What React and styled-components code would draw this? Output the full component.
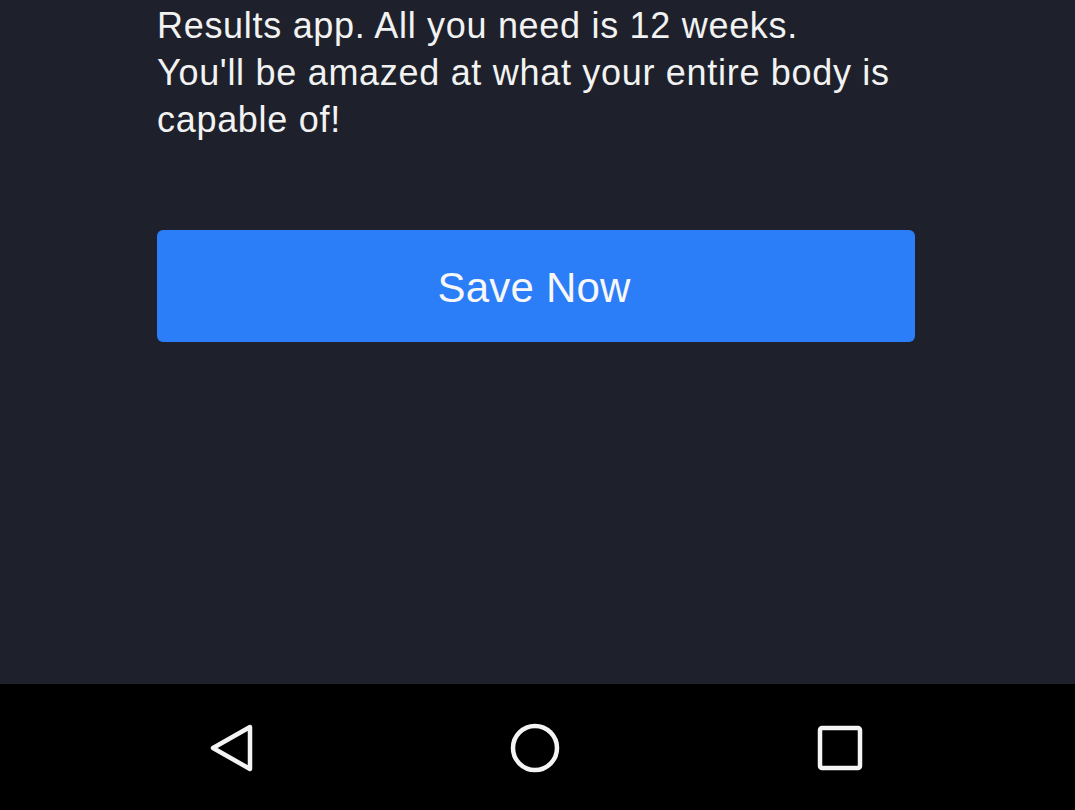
import React from "react";
import styled, { createGlobalStyle } from "styled-components";

const Global = createGlobalStyle`
  html, body { margin: 0; padding: 0; background: #1e212b; }
  #root { height: 810px; }
`;

const Screen = styled.div`
  width: 1075px;
  height: 810px;
  display: flex;
  flex-direction: column;
  background: #1e212b;
  font-family: "Liberation Sans", Arial, sans-serif;
  overflow: hidden;
`;

const Content = styled.main`
  flex: 1;
  display: flex;
  flex-direction: column;
  padding: 2px 150px 0 157px;
`;

const Body = styled.p`
  margin: 0;
  color: #f2f2f2;
  font-size: 36px;
  line-height: 47px;
  letter-spacing: 0.7px;
  white-space: nowrap;
`;

const PrimaryButton = styled.button`
  margin-top: 87px;
  width: 758px;
  height: 112px;
  border: none;
  border-radius: 6px;
  background: #2b7df8;
  color: #f7f7f7;
  font-family: "Liberation Sans", Arial, sans-serif;
  font-size: 42px;
  letter-spacing: 0.2px;
  padding: 3px 4px 0 0;
  cursor: pointer;
`;

const NavRow = styled.nav`
  height: 126px;
  background: #000;
  display: flex;
  align-items: center;
`;

const IconWrap = styled.div`
  width: ${(p) => p.$w}px;
  margin-left: ${(p) => p.$ml}px;
  display: flex;
  justify-content: center;
  align-items: center;
  padding-top: 2px;
`;

export default function App() {
  return (
    <>
      <Global />
      <Screen>
        <Content>
          <Body>
            Results app. All you need is 12 weeks.
            <br />
            You'll be amazed at what your entire body is
            <br />
            capable of!
          </Body>
          <PrimaryButton>Save Now</PrimaryButton>
        </Content>
        <NavRow>
          <IconWrap $w={50} $ml={207}>
            <svg width="50" height="52" viewBox="0 0 50 52">
              <path
                d="M43 5 L6 26 L43 47 Z"
                fill="none"
                stroke="#f4f4f4"
                strokeWidth="4.5"
                strokeLinejoin="round"
              />
            </svg>
          </IconWrap>
          <IconWrap $w={52} $ml={252}>
            <svg width="52" height="52" viewBox="0 0 52 52">
              <circle cx="26" cy="26" r="22" fill="none" stroke="#f4f4f4" strokeWidth="4.5" />
            </svg>
          </IconWrap>
          <IconWrap $w={48} $ml={255}>
            <svg width="48" height="48" viewBox="0 0 48 48">
              <rect x="4" y="4" width="40" height="40" rx="2" fill="none" stroke="#f4f4f4" strokeWidth="4.5" />
            </svg>
          </IconWrap>
        </NavRow>
      </Screen>
    </>
  );
}
